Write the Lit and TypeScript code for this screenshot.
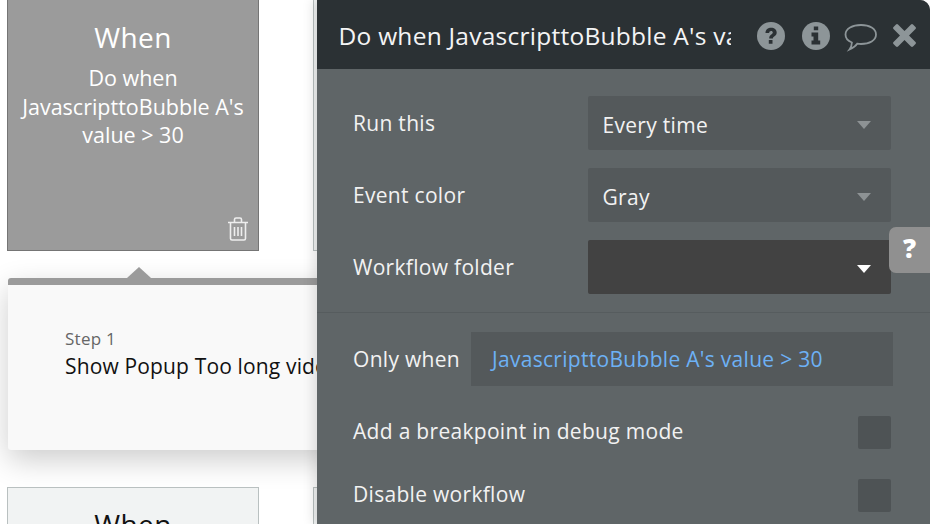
import { LitElement, html, css } from "lit";
import { customElement } from "lit/decorators.js";

const row = (label: string, value: string, dark = false) => html`
  <div class="row">
    <span class="label">${label}</span>
    <div class="select ${dark ? "dark" : ""}">
      <span>${value}</span><i class="caret"></i>
    </div>
  </div>`;

@customElement("app-root")
export class AppRoot extends LitElement {
  static styles = css`
    :host { display: block; width: 930px; height: 524px; position: relative; overflow: hidden; background: #fff;
      font-family: "Open Sans", sans-serif; }
    .card { position: absolute; box-sizing: border-box; width: 252px; left: 7px; text-align: center; }
    .when1 { top: -10px; height: 261px; background: #9b9b9b; border: 1px solid #757575; color: #fff; padding: 28px 4px 0; }
    .when1 h3 { margin: 0; font-weight: 400; font-size: 28px; line-height: 36px; letter-spacing: .4px; }
    .when1 p { margin: 9px 0 0; font-size: 21.5px; line-height: 28.5px; }
    .trash { position: absolute; right: 9px; bottom: 9px; }
    .peer { position: absolute; left: 313px; width: 20px; box-sizing: border-box; border: 1px solid #b9c0c0; background: #f1f3f3; }
    .peer.a { top: -10px; height: 261px; }
    .peer.b { top: 487px; height: 60px; }
    .step { position: absolute; left: 8px; top: 278px; width: 330px; height: 172px; box-sizing: border-box; background: #f9f9f9;
      border-top: 7px solid #9b9b9b; border-radius: 3px; box-shadow: 0 10px 30px rgba(0,0,0,.2); padding: 42px 0 0 57px; color: #111; }
    .step::before { content: ""; position: absolute; left: 119px; top: -18px; border: 12px solid transparent; border-top: 0; border-bottom: 11px solid #9b9b9b; }
    .step small { display: block; font-size: 17px; line-height: 24px; color: #666; letter-spacing: .25px; }
    .step b { display: block; font-weight: 400; font-size: 21px; line-height: 30px; white-space: nowrap; letter-spacing: .15px; }
    .when2 { top: 487px; height: 60px; background: #f1f3f3; border: 1px solid #b9c0c0; color: #111; font-size: 28px; line-height: 36px; padding-top: 18px; letter-spacing: .4px; }
    .panel { position: absolute; left: 317px; top: 0; width: 612.5px; height: 524px; background: #5f6567; border-top-right-radius: 10px; overflow: hidden; color: #fff;
      box-shadow: -4px 0 12px rgba(0,0,0,.12); }
    .head { height: 69px; background: #2b3134; display: flex; align-items: center; padding: 2px 10px 0 21.5px; box-sizing: border-box; }
    .title { width: 392.5px; overflow: hidden; white-space: nowrap; font-size: 24.5px; color: #f4f4f4; letter-spacing: .25px; }
    .icons { margin-left: 26px; display: flex; align-items: center; gap: 0; }
    .body { padding: 27px 39px 0 36px; }
    .row { display: flex; align-items: center; justify-content: space-between; height: 54px; margin-bottom: 18px; }
    .label { font-size: 21px; color: #f2f2f2; letter-spacing: .3px; white-space: nowrap; flex: none; }
    .select { width: 303px; height: 54px; box-sizing: border-box; background: #54595b; border-radius: 2px; display: flex; align-items: center; justify-content: space-between;
      padding: 4px 20px 0 15px; font-size: 21px; color: #f2f2f2; letter-spacing: .3px; }
    .select.dark { background: #424242; }
    .caret { border: 7.5px solid transparent; border-bottom: 0; border-top: 8px solid #8d9294; }
    .dark .caret { border-top-color: #fff; }
    .divider { height: 1px; background: #565c5e; }
    .lower { padding: 19px 37px 0 36px; }
    .only { display: flex; align-items: center; height: 54px; }
    .only-val { margin-left: 11px; width: 422px; height: 54px; background: #54595b; box-sizing: border-box; padding: 0 21px; display: flex; align-items: center; color: #6db1f5; font-size: 21px; letter-spacing: .3px; flex: none; }
    .check { display: flex; justify-content: space-between; align-items: center; height: 34px; padding-right: 2px; }
    .check .label { position: relative; top: -1px; }
    .check .box { width: 33px; height: 33px; background: #4e5355; border-radius: 2px; }
    .c1 { margin-top: 29px; }
    .c2 { margin-top: 29px; }
    .help { position: absolute; left: 889px; top: 227px; width: 41px; height: 46px; box-sizing: border-box; padding-bottom: 4px; background: #909090; border-radius: 7px 0 0 7px; color: #fff;
      display: flex; align-items: center; justify-content: center; font-weight: 800; font-size: 26px; }
  `;

  render() {
    return html`
      <div class="peer a"></div>
      <div class="peer b"></div>
      <div class="card when1">
        <h3>When</h3>
        <p>Do when JavascripttoBubble A's value &gt; 30</p>
        <svg class="trash" width="22" height="24" viewBox="0 0 22 24" fill="none" stroke="#eee" stroke-width="1.6">
          <path d="M1 5.500h20M3.500 6v15.500a1.500 1.500 0 0 0 1.500 1.500h12a1.500 1.500 0 0 0 1.500-1.500V6M7.500 5V2.500A1.500 1.500 0 0 1 9 1h4a1.500 1.500 0 0 1 1.500 1.500V5M7.500 10v9M11 10v9M14.500 10v9"/>
        </svg>
      </div>
      <div class="step">
        <small>Step 1</small>
        <b>Show Popup Too long video</b>
      </div>
      <div class="card when2">When</div>
      <div class="panel">
        <div class="head">
          <div class="title">Do when JavascripttoBubble A's value &gt; 30</div>
          <div class="icons">
            <svg width="28" height="28" viewBox="0 0 28 28" style="margin-right:17px">
              <circle cx="14" cy="14" r="14" fill="#8d9598"/>
              <path d="M8.500 11c0-3.300 2.500-5.200 5.700-5.200 3.100 0 5.500 1.800 5.500 4.700 0 2.200-1.200 3.200-2.500 4-1 .7-1.300 1-1.300 2h-3.700c0-2.300.8-3.200 2.100-4 .9-.6 1.500-1 1.500-1.900 0-.9-.7-1.500-1.700-1.500-1.100 0-1.900.7-1.900 1.900z M11.800 18h3.700v3.700h-3.700z" fill="#2b3134"/>
            </svg>
            <svg width="28" height="28" viewBox="0 0 28 28" style="margin-right:15px">
              <circle cx="14" cy="14" r="14" fill="#8d9598"/>
              <path d="M11.800 4.500h4.400v3.800h-4.400z M9.500 10.500h6.700v8h2v4h-8.700v-4h2v-4h-2z" fill="#2b3134"/>
            </svg>
            <svg width="34" height="30" viewBox="0 0 34 30" fill="none" stroke="#8d9598" stroke-width="1.800" style="margin-right:14px;position:relative;top:2px;left:-1px">
              <path d="M17 2c8.500 0 15 3.700 15 9.500S25.500 21 17 21c-1.600 0-2.500-.1-3.800-.3C12 22.500 10 24.500 5.500 26.500c1.500-2 2.300-4 2.400-7C4 18 1.500 15 1.500 11.500 1.500 5.700 8.500 2 17 2z"/>
            </svg>
            <svg width="23" height="23" viewBox="0 0 23 23" fill="#8d9598">
              <path d="M5 .5l6.500 6.500L18 .5a1.500 1.500 0 0 1 2 0l2.500 2.500a1.500 1.500 0 0 1 0 2L16 11.500l6.500 6.500a1.500 1.500 0 0 1 0 2L20 22.500a1.500 1.500 0 0 1-2 0L11.500 16 5 22.500a1.500 1.500 0 0 1-2 0L.5 20a1.500 1.500 0 0 1 0-2L7 11.500.5 5a1.500 1.500 0 0 1 0-2L3 .5a1.500 1.500 0 0 1 2 0z"/>
            </svg>
          </div>
        </div>
        <div class="body">
          ${row("Run this", "Every time")}
          ${row("Event color", "Gray")}
          ${row("Workflow folder", "", true)}
        </div>
        <div class="divider"></div>
        <div class="lower">
          <div class="only"><span class="label">Only when</span><div class="only-val">JavascripttoBubble A's value &gt; 30</div></div>
          <div class="check c1"><span class="label">Add a breakpoint in debug mode</span><i class="box"></i></div>
          <div class="check c2"><span class="label">Disable workflow</span><i class="box"></i></div>
        </div>
      </div>
      <div class="help">?</div>
    `;
  }
}
